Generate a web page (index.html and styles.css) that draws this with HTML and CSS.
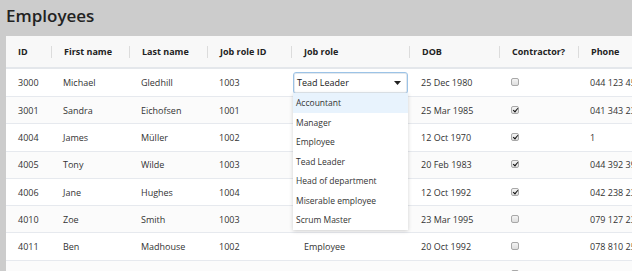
FILE: index.html
```html
<!DOCTYPE html>
<html>
<head>
<meta charset="utf-8">
<link rel="stylesheet" href="styles.css">
</head>
<body>
<h1 class="title">Employees</h1>
<div class="panel">
  <table class="grid">
    <colgroup>
      <col class="c-id"><col class="c-first"><col class="c-last"><col class="c-roleid"><col class="c-role"><col class="c-dob"><col class="c-con"><col class="c-phone">
    </colgroup>
    <thead>
      <tr>
        <th><span class="hd">ID</span></th>
        <th><span class="hd sep">First name</span></th>
        <th><span class="hd sep">Last name</span></th>
        <th><span class="hd sep">Job role ID</span></th>
        <th><span class="hd sep">Job role</span></th>
        <th><span class="hd sep">DOB</span></th>
        <th><span class="hd sep">Contractor?</span></th>
        <th><span class="hd sep">Phone</span></th>
      </tr>
    </thead>
    <tbody>
      <tr class="first">
        <td>3000</td><td>Michael</td><td>Gledhill</td><td>1003</td>
        <td class="role-cell">
          <div class="select"><span>Tead Leader</span><svg class="caret" width="7" height="4" viewBox="0 0 7 4"><path d="M0 0H7L3.5 4Z" fill="#222"/></svg></div>
          <ul class="menu">
            <li class="active">Accountant</li>
            <li>Manager</li>
            <li>Employee</li>
            <li>Tead Leader</li>
            <li>Head of department</li>
            <li>Miserable employee</li>
            <li>Scrum Master</li>
          </ul>
        </td>
        <td>25 Dec 1980</td><td><span class="cb"></span></td><td>044 123 4567</td>
      </tr>
      <tr>
        <td>3001</td><td>Sandra</td><td>Eichofsen</td><td>1001</td><td class="role"></td>
        <td>25 Mar 1985</td><td><span class="cb on"></span></td><td>041 343 2345</td>
      </tr>
      <tr>
        <td>4004</td><td>James</td><td>Müller</td><td>1002</td><td class="role"></td>
        <td>12 Oct 1970</td><td><span class="cb on"></span></td><td>1</td>
      </tr>
      <tr>
        <td>4005</td><td>Tony</td><td>Wilde</td><td>1003</td><td class="role"></td>
        <td>20 Feb 1983</td><td><span class="cb on"></span></td><td>044 392 3945</td>
      </tr>
      <tr>
        <td>4006</td><td>Jane</td><td>Hughes</td><td>1004</td><td class="role"></td>
        <td>12 Oct 1992</td><td><span class="cb on"></span></td><td>042 238 2345</td>
      </tr>
      <tr>
        <td>4010</td><td>Zoe</td><td>Smith</td><td>1003</td><td class="role"></td>
        <td>23 Mar 1995</td><td><span class="cb"></span></td><td>079 127 2345</td>
      </tr>
      <tr>
        <td>4011</td><td>Ben</td><td>Madhouse</td><td>1002</td><td class="role">Employee</td>
        <td>20 Oct 1992</td><td><span class="cb"></span></td><td>078 810 2545</td>
      </tr>
      <tr>
        <td></td><td></td><td></td><td></td><td class="role"></td>
        <td></td><td><span class="cb"></span></td><td></td>
      </tr>
    </tbody>
  </table>
</div>
</body>
</html>
```
FILE: styles.css
```css
html, body {
  margin: 0;
  padding: 0;
  background: #cccccc;
  overflow: hidden;
  width: 632px;
  height: 271px;
}
body {
  font-family: "Open Sans", "Noto Sans", sans-serif;
  color: #333;
}
.title {
  margin: 0;
  padding: 4px 0 0 6px;
  height: 36px;
  box-sizing: border-box;
  font-size: 17px;
  font-weight: 600;
  color: #222;
  line-height: 24px;
}
.panel {
  margin-left: 6px;
  width: 700px;
  background: #fff;
  border-top-left-radius: 2px;
}
.grid {
  border-collapse: collapse;
  table-layout: fixed;
  width: 700px;
  font-size: 9px;
}
.c-id { width: 45px; }
.c-first { width: 78px; }
.c-last { width: 78px; }
.c-roleid { width: 84px; }
.c-role { width: 118px; }
.c-dob { width: 90px; }
.c-con { width: 79px; }
.c-phone { width: 128px; }
.grid th {
  height: 30px;
  padding: 1px 0 0 0;
  background: #f8f8f8;
  border-bottom: 2px solid #e4e7eb;
  text-align: left;
  font-weight: 700;
  color: #222;
}
.hd {
  display: block;
  padding-left: 12px;
  line-height: 12px;
}
.hd.sep {
  border-left: 1px solid #dcdcdc;
}
.grid td {
  height: 26.3px;
  padding: 0 0 0 12px;
  border-bottom: 1px solid #e6e9ee;
  white-space: nowrap;
  overflow: hidden;
  color: #333;
}
.grid tr.first td {
  height: 27px;
}
.grid tbody tr:nth-child(even) td {
  background: #fbfbfb;
}
.grid td.role {
  padding-left: 13px;
  color: #333;
}
.grid td.role-cell {
  padding: 0 1px 0 2px;
  position: relative;
  overflow: visible;
}
.select {
  height: 22px;
  box-sizing: border-box;
  border: 1px solid #9cc3e6;
  border-radius: 3px;
  display: flex;
  align-items: center;
  justify-content: space-between;
  padding: 0 6px 0 3px;
  background: #fff;
  color: #222;
  box-shadow: inset 0 0 0 1px #e2e8ee;
}
.caret { display: block; }
.menu {
  position: absolute;
  left: 2px;
  top: 24px;
  width: 115px;
  margin: 0;
  padding: 0;
  list-style: none;
  background: #fff;
  box-shadow: 0 1px 4px rgba(0,0,0,0.18);
  z-index: 5;
}
.menu li {
  height: 19.5px;
  line-height: 19.5px;
  padding-left: 3px;
  color: #333;
  font-size: 8.5px;
}
.menu li.active {
  background: #e8f3fd;
}
.cb {
  display: inline-block;
  width: 8px;
  height: 8px;
  box-sizing: border-box;
  border: 1px solid #a8a8a8;
  border-radius: 2px;
  background: linear-gradient(#f4f4f4, #dedede);
  position: relative;
  vertical-align: middle;
  margin-top: -3px;
}
.cb.on::after {
  content: "";
  position: absolute;
  left: 2px;
  top: 0px;
  width: 2px;
  height: 4px;
  border: solid #111;
  border-width: 0 1.5px 1.5px 0;
  transform: rotate(40deg);
}
```
